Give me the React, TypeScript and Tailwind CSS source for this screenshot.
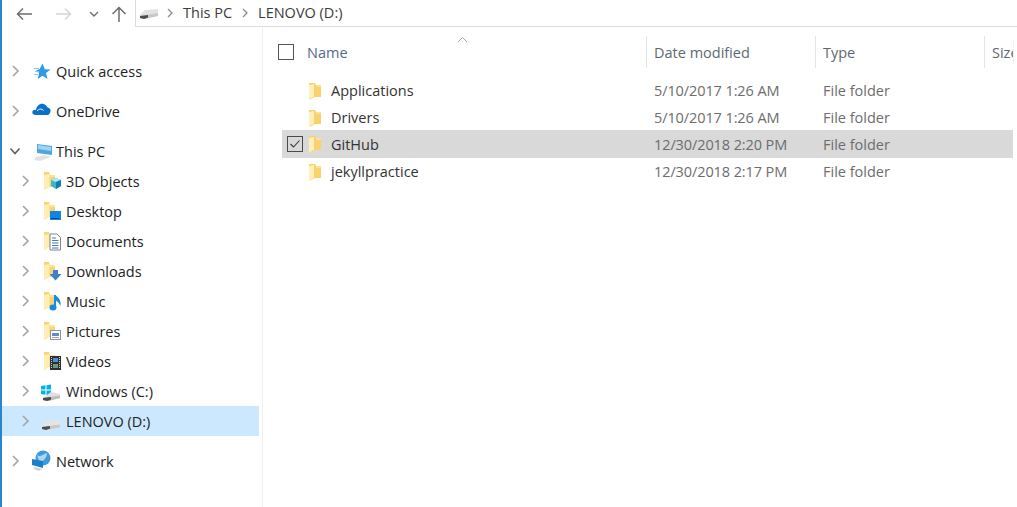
import React from "react";

const Chevron = ({ open }: { open?: boolean }) => (
  <svg width="14" height="14" viewBox="0 0 14 14" fill="none" className="shrink-0">
    {open ? (
      <path d="M2.5 4.5 L7 9.5 L11.5 4.5" stroke="#5f5f5f" strokeWidth="1.6" />
    ) : (
      <path d="M5 2 L10 7 L5 12" stroke="#a6a6a6" strokeWidth="1.7" />
    )}
  </svg>
);

const FolderBase = () => (
  <>
    <path d="M3 2 L8 2 L9 5 L14 5 L14 17 L8 17 L3 20 Z" fill="#f8d571" />
    <path d="M3 5 L8.5 4 L8.5 16.5 L3 20 Z" fill="#ffeeb4" />
    <path d="M9 5 L14 5 L14 7 L9 7 Z" fill="#fbe3a0" />
  </>
);

const Box = ({ children }: { children: React.ReactNode }) => (
  <svg width="22" height="22" viewBox="0 0 22 22" className="ml-[9px] shrink-0">
    {children}
  </svg>
);

const icons: Record<string, React.ReactNode> = {
  quick: (
    <>
      <path d="M11.5 3.5 L13.8 9.2 L19.5 9.5 L15 13 L16.5 19 L11.5 15.8 L6.7 19 L8.2 13 L5 10.5 L8.5 9.3 Z" fill="#2e9ae6" />
      <path d="M3 8.5 H8 M4 11.5 H8 M3 14.5 H7" stroke="#8cc9f2" strokeWidth="1" />
    </>
  ),
  one: (
    <>
      <path d="M5 10 C5.5 6 9 3 12.5 4 C14.5 4.5 16 6 16.5 7.5 C18.5 7.7 20 9.5 19.5 11.5 C19.2 13 18 15 16.5 15 L5 15 C2.5 15 1 13.5 1.3 12 C1.6 10.3 3.5 9.5 5 10 Z" fill="#0a70c8" />
      <path d="M6 11 C8 8.5 10.5 8.5 12.5 10.5" stroke="#ffffff" strokeWidth="1" fill="none" />
    </>
  ),
  pc: (
    <>
      <path d="M6 4 L21 6 L21 15 L6 13 Z" fill="#4fa6df" />
      <path d="M7 5 L20 7 L20 11 L7 9 Z" fill="#9fd3f2" />
      <path d="M5 17 L14 15 L20 17 L9 21 L3 20 Z" fill="#e2e2e2" />
    </>
  ),
  obj: (
    <>
      <FolderBase />
      <path d="M10 10 L15 8 L20 10 L20 16 L15 19 L10 16 Z" fill="#38b8c4" />
      <path d="M10 10 L15 12 L20 10 L15 8 Z" fill="#a8ecf0" />
      <path d="M15 12 L20 10 L20 16 L15 19 Z" fill="#0e7fb0" />
    </>
  ),
  desk: (
    <>
      <FolderBase />
      <rect x="9" y="11" width="11" height="9" fill="#0f86e0" />
      <rect x="10" y="18" width="8" height="1" fill="#0a3f78" />
    </>
  ),
  docs: (
    <>
      <FolderBase />
      <path d="M9 4 L16 4 L19.5 7.5 L19.5 20 L9 20 Z" fill="#ffffff" stroke="#7b8794" strokeWidth="1" />
      <path d="M11 8 H15 M11 10.5 H17.5 M11 13 H17.5 M11 15.5 H17.5 M11 18 H17.5" stroke="#4c7fb0" strokeWidth="1" />
    </>
  ),
  down: (
    <>
      <FolderBase />
      <path d="M12 10 L17 10 L17 14 L20.5 14 L14.5 20.5 L8.5 14 L12 14 Z" fill="#3f81c8" />
    </>
  ),
  music: (
    <>
      <FolderBase />
      <path d="M14 5 L14 17" stroke="#1688e6" strokeWidth="2" />
      <ellipse cx="12" cy="17.5" rx="3.5" ry="3" fill="#1688e6" />
      <path d="M14 5 C17 7 20.5 10 19.5 16 C18.5 13 16 11 14 10 Z" fill="#1688e6" />
    </>
  ),
  pics: (
    <>
      <FolderBase />
      <rect x="9.5" y="10.5" width="10" height="9" fill="#ffffff" stroke="#8b95a1" />
      <rect x="11" y="13" width="7" height="3" fill="#5f8fbf" />
      <path d="M11 17.5 H18" stroke="#9aa4ae" />
    </>
  ),
  vids: (
    <>
      <FolderBase />
      <rect x="9" y="6" width="11" height="14" fill="#2f2f2f" />
      <rect x="12" y="8" width="5" height="4" fill="#4f8fd0" />
      <rect x="12" y="14" width="5" height="4" fill="#5f9f7f" />
      <path d="M10.5 7 V19 M18.5 7 V19" stroke="#d0d0d0" strokeDasharray="1 1" />
    </>
  ),
  win: (
    <>
      <path d="M0 6 L4.5 5.3 V9.5 H0 Z M5.5 5.2 L10 4.5 V9.5 H5.5 Z M0 10.5 H4.5 V14.7 L0 14 Z M5.5 10.5 H10 V15.5 L5.5 14.8 Z" fill="#00b4e8" />
      <path d="M2 18 L10 12 L19 14 L19 18 L4 21 Z" fill="#e0e0e0" />
      <path d="M2 18 L19 15.5 L19 18 L8 21 L2 20 Z" fill="#bcbcbc" />
      <path d="M2 18 L10 17 L10 19.5 L6 21 L2 20 Z" fill="#4a4a4a" />
    </>
  ),
  drive: (
    <>
      <path d="M1 16 L6 11 L19 10 L19 15 L1 18 Z" fill="#e4e4e4" />
      <path d="M1 17 L19 14.5 L19 17.5 L5 20 L1 19 Z" fill="#c9c9c9" />
      <path d="M1 17 L9 16 L9 18.5 L5 20 L1 19 Z" fill="#4d4d4d" />
    </>
  ),
  net: (
    <>
      <circle cx="12" cy="8" r="7.5" fill="#3e9ad8" />
      <path d="M6 5 C9 8 12 4 16 3 C16 7 13 11 9 13 Z" fill="#a8d8f4" />
      <path d="M1 9 L12 11 L12 18 L1 15 Z" fill="#1c7ecb" />
      <path d="M3 17 L11 19 L8 21 L3 19 Z" fill="#cfcfcf" />
    </>
  ),
};

type NavProps = { label: string; icon: string; child?: boolean; open?: boolean; selected?: boolean; className?: string };

const NavRow = ({ label, icon, child, open, selected, className }: NavProps) => (
  <div
    className={`flex h-[30px] w-[257px] items-center ${child ? "pl-[16px]" : "pl-[6px]"} ${selected ? "bg-[#cce8ff]" : ""} ${className ?? ""}`}
  >
    <Chevron open={open} />
    <Box>{icons[icon]}</Box>
    <span className="ml-[3px] pt-[2px] text-[#222222]">{label}</span>
  </div>
);

const SmallFolder = () => (
  <svg width="14" height="20" viewBox="0 0 14 20" className="ml-[5px] shrink-0">
    <path d="M1 2 L7 2 L8 4 L13 4 L13 16 L7 16 L1 19 Z" fill="#f8d26a" />
    <path d="M1 4 L6 3 L6 15.5 L1 19 Z" fill="#ffefb8" />
    <path d="M8 4 L13 4 L13 6 L8 6 Z" fill="#fbe09a" />
  </svg>
);

type FileRow = { name: string; date: string; selected?: boolean };
const files: FileRow[] = [
  { name: "Applications", date: "5/10/2017 1:26 AM" },
  { name: "Drivers", date: "5/10/2017 1:26 AM" },
  { name: "GitHub", date: "12/30/2018 2:20 PM", selected: true },
  { name: "jekyllpractice", date: "12/30/2018 2:17 PM" },
];

export default function App() {
  return (
    <div className="flex h-screen w-full flex-col overflow-hidden border-l-2 border-[#2a86cc] bg-white text-[14.5px] font-['Open_Sans','Noto_Sans',sans-serif]">
      {/* Toolbar */}
      <div className="flex h-[27px] shrink-0">
        <div className="flex w-[133px] shrink-0 items-center">
          <svg width="16" height="14" viewBox="0 0 16 14" fill="none" className="ml-[14px]">
            <path d="M16 7 H1.5 M7 1.5 L1.5 7 L7 12.5" stroke="#6e6e6e" strokeWidth="1.5" />
          </svg>
          <svg width="16" height="14" viewBox="0 0 16 14" fill="none" className="ml-[24px]">
            <path d="M0 7 H14.5 M9 1.5 L14.5 7 L9 12.5" stroke="#d6d6d6" strokeWidth="1.5" />
          </svg>
          <svg width="10" height="8" viewBox="0 0 10 8" fill="none" className="ml-[17px]">
            <path d="M1 2 L5 6 L9 2" stroke="#6e6e6e" strokeWidth="1.4" />
          </svg>
          <svg width="16" height="16" viewBox="0 0 16 16" fill="none" className="ml-[12px]">
            <path d="M8 16 V1.5 M1.5 8 L8 1.5 L14.5 8" stroke="#6e6e6e" strokeWidth="1.5" />
          </svg>
        </div>
        <div className="flex flex-1 items-center border-b border-l border-[#dcdcdc] pb-[1px] text-[#3c3c3c]">
          <svg width="20" height="12" viewBox="0 0 20 12" className="ml-[3px] mt-[3px] shrink-0">
            <path d="M1 7 L6 2 L19 1 L19 6 L1 9 Z" fill="#e2e2e2" />
            <path d="M1 8 L19 5 L19 8 L6 11 L1 10 Z" fill="#c9c9c9" />
            <path d="M1 8 L9 7 L9 9.5 L5 11 L1 10 Z" fill="#4d4d4d" />
          </svg>
          <svg width="8" height="10" viewBox="0 0 8 10" fill="none" className="ml-[7px]">
            <path d="M2 1 L6 5 L2 9" stroke="#8c8c8c" strokeWidth="1.3" />
          </svg>
          <span className="ml-[9px]">This PC</span>
          <svg width="8" height="10" viewBox="0 0 8 10" fill="none" className="ml-[9px]">
            <path d="M2 1 L6 5 L2 9" stroke="#8c8c8c" strokeWidth="1.3" />
          </svg>
          <span className="ml-[9px]">LENOVO (D:)</span>
        </div>
      </div>

      <div className="flex min-h-0 flex-1">
        {/* Sidebar */}
        <aside className="w-[261px] shrink-0 border-r border-[#f0f0f0] pt-[29px]">
          <NavRow label="Quick access" icon="quick" />
          <NavRow label="OneDrive" icon="one" className="mt-[10px]" />
          <NavRow label="This PC" icon="pc" open className="mt-[10px]" />
          <NavRow label="3D Objects" icon="obj" child />
          <NavRow label="Desktop" icon="desk" child />
          <NavRow label="Documents" icon="docs" child />
          <NavRow label="Downloads" icon="down" child />
          <NavRow label="Music" icon="music" child />
          <NavRow label="Pictures" icon="pics" child />
          <NavRow label="Videos" icon="vids" child />
          <NavRow label="Windows (C:)" icon="win" child />
          <NavRow label="LENOVO (D:)" icon="drive" child selected />
          <NavRow label="Network" icon="net" className="mt-[10px]" />
        </aside>

        {/* Main list */}
        <main className="min-w-0 flex-1 pt-[9px]">
          <div className="relative flex h-[32px] items-center whitespace-nowrap text-[#5d6874]">
            <div className="flex h-full w-[384px] shrink-0 items-center border-r border-[#e5e5e5] pl-[15px]">
              <span className="h-[16px] w-[16px] border border-[#555555]" />
              <span className="ml-[13px] pt-[2px] text-[#56688a]">Name</span>
            </div>
            <svg width="11" height="7" viewBox="0 0 11 7" fill="none" className="absolute left-[194px] top-[0px]">
              <path d="M1 6 L5.5 1.5 L10 6" stroke="#a8a8a8" />
            </svg>
            <div className="flex h-full w-[169px] shrink-0 items-center border-r border-[#e5e5e5] pl-[7px] pt-[2px]">Date modified</div>
            <div className="flex h-full w-[169px] shrink-0 items-center border-r border-[#e5e5e5] pl-[7px] pt-[2px]">Type</div>
            <div className="w-[29px] overflow-hidden border-r border-[#f3f3f3] pl-[7px] pt-[2px]">Size</div>
          </div>
          <div className="ml-[19px] mt-[9px] w-[731px]">
            {files.map((f) => (
              <div
                key={f.name}
                className={`flex items-center whitespace-nowrap ${f.selected ? "-mt-px h-[28px] bg-[#d9d9d9]" : "h-[27px]"}`}
              >
                <div className="flex w-[372px] shrink-0 items-center pl-[5px]">
                  {f.selected ? (
                    <svg width="16" height="16" viewBox="0 0 16 16" fill="none" className="shrink-0">
                      <rect x="0.5" y="0.5" width="15" height="15" stroke="#4a4a4a" />
                      <path d="M3.5 8 L6.5 11 L12.5 4.5" stroke="#3a3a3a" strokeWidth="1.1" />
                    </svg>
                  ) : (
                    <span className="h-[16px] w-[16px] shrink-0" />
                  )}
                  <SmallFolder />
                  <span className={`ml-[9px] text-[#333333] ${f.selected ? "pt-[2px]" : ""}`}>{f.name}</span>
                </div>
                <div className={`w-[169px] shrink-0 tracking-[-0.1px] text-[#6d6d6d] ${f.selected ? "pt-[2px]" : ""}`}>{f.date}</div>
                <div className={`text-[#6d6d6d] ${f.selected ? "pt-[2px]" : ""}`}>File folder</div>
              </div>
            ))}
          </div>
        </main>
      </div>
    </div>
  );
}
